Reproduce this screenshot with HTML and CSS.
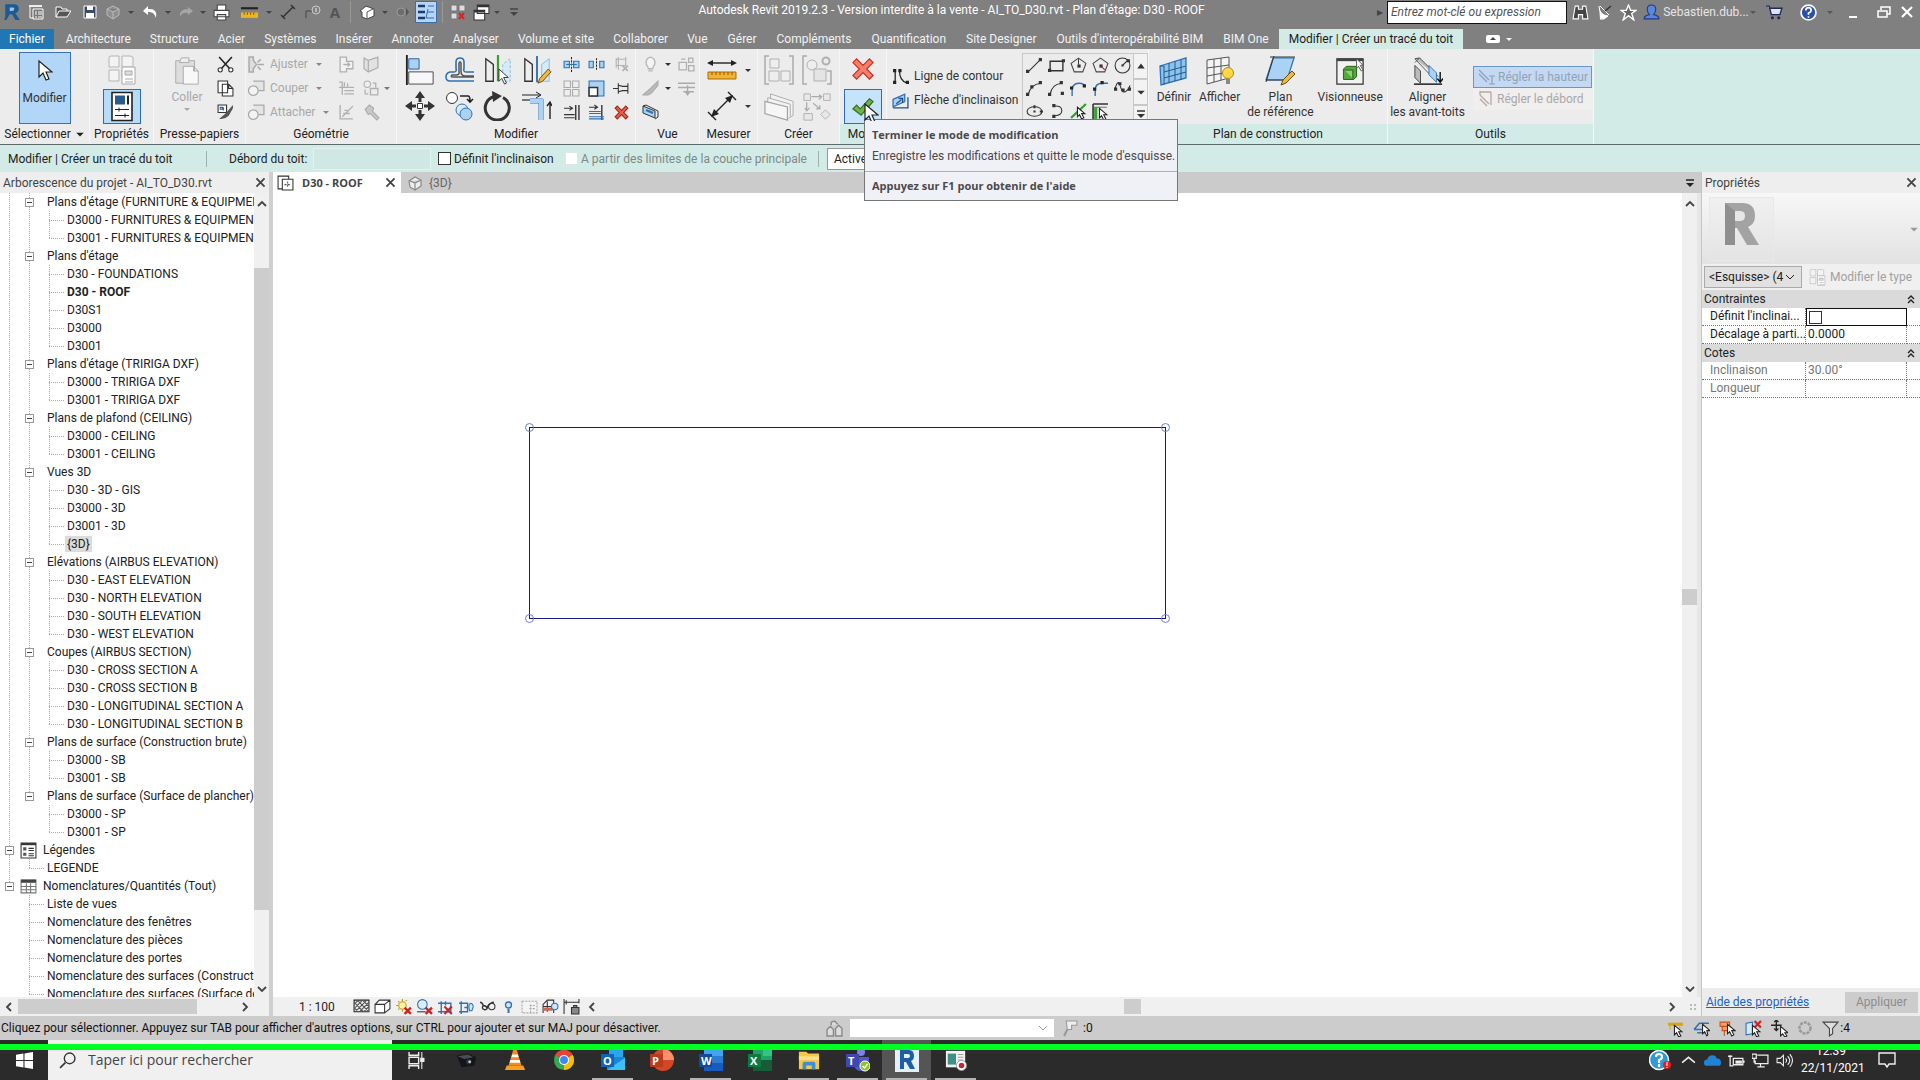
FILE: index.html
```html
<!DOCTYPE html>
<html lang="fr">
<head>
<meta charset="utf-8">
<title>Autodesk Revit 2019.2.3 - AI_TO_D30.rvt</title>
<link rel="stylesheet" href="styles.css">
</head>
<body>
<svg class="defs" width="0" height="0" aria-hidden="true">
  <symbol id="revit" viewBox="0 0 16 16"><path d="M2 1h8q4 0 4 4 0 3-3 4l4 6h-4l-3-5H6l-3 5H1l1-3z" fill="#1c5a94"/><path d="M6 4h3q1 0 1 1 0 2-2 2H6z" fill="#9cc3e6"/></symbol>
  <symbol id="list" viewBox="0 0 16 16"><path d="M1 1h13v2H1z" fill="#eee"/><path d="M2 3v11h4M5 5h10v10H5z" fill="#777" stroke="#fff"/><path d="M7 8h2m1 0h4M7 10h2m1 0h4M7 13h2m1 0h4" stroke="#fff"/></symbol>
  <symbol id="open" viewBox="0 0 16 16"><path d="M1 13V3h5l1 2h5v2M1 13l3-6h12l-4 6z" fill="#555" stroke="#fff"/></symbol>
  <symbol id="save" viewBox="0 0 16 16"><path d="M2 2h12v12H2z" fill="#3b4a68" stroke="#fff"/><path d="M5 2h6v4H5zM4 9h8v5H4z" fill="#fff"/></symbol>
  <symbol id="cube" viewBox="0 0 16 16"><path d="M2 5l6-3 6 3v6l-6 4-6-4zM2 5l6 3 6-3M8 8v7" fill="#8f8f8f" stroke="#bbb"/></symbol>
  <symbol id="undo" viewBox="0 0 16 16"><path d="M6 2L1 7l5 4V8q6-1 8 6 2-10-8-9z" fill="#fff"/></symbol>
  <symbol id="redo" viewBox="0 0 16 16"><path d="M10 3l5 4-5 4V9q-6-1-8 4-1-8 8-8z" fill="#a6a6a6"/></symbol>
  <symbol id="print" viewBox="0 0 16 16"><path d="M4 1h8v5H4zM1 6h14v6H1zM4 10h8v5H4z" fill="#fff" stroke="#444"/></symbol>
  <symbol id="rule" viewBox="0 0 16 16"><path d="M0 4h16" stroke="#222" stroke-width="2"/><path d="M0 8h16v5H0z" fill="#f0b420"/><path d="M3 8v2m3-2v2m3-2v2m3-2v2" stroke="#8a5a00"/></symbol>
  <symbol id="dim" viewBox="0 0 16 16"><path d="M3 13L13 3M1 11l4 4M11 1l4 4" stroke="#333" stroke-width="1.5"/></symbol>
  <symbol id="tag" viewBox="0 0 16 16"><path d="M1 14V7h6" stroke="#444" fill="none"/><circle cx="11" cy="6" r="4" fill="none" stroke="#ccc"/><path d="M11 4v4" stroke="#eee"/></symbol>
  <symbol id="home" viewBox="0 0 16 16"><path d="M1 7l6-5 8 3v7l-7 3-5-2V8z" fill="#fff" stroke="#444"/><path d="M8 8v7M8 8l6-3" stroke="#555"/></symbol>
  <symbol id="dot" viewBox="0 0 16 16"><circle cx="7" cy="8" r="4" fill="#6d6d6d" stroke="#9a9a9a"/><path d="M12 4l3 4-3 4z" fill="#555"/></symbol>
  <symbol id="thin" viewBox="0 0 20 20"><path d="M2 4h7M2 10h7M2 16h7" stroke="#1f3c66" stroke-width="2.5"/><path d="M12 4h6M11 10h7M10 16h8M12 7l-2 9" stroke="#2f6db0" fill="none"/></symbol>
  <symbol id="closewin" viewBox="0 0 16 16"><path d="M1 1h6v6H1zM9 1h6v6H9zM1 9h6v6H1z" fill="#ddd" stroke="#777"/><path d="M9 9l5 6M14 9l-5 6" stroke="#d22" stroke-width="2"/></symbol>
  <symbol id="switchwin" viewBox="0 0 16 16"><path d="M4 1h11v8H4zM1 6h10v9H1z" fill="#fff" stroke="#333"/><path d="M1 7h10M4 2h11" stroke="#333" stroke-width="2"/></symbol>
  <symbol id="caret" viewBox="0 0 8 8"><path d="M1 3h6L4 6z" fill="currentColor"/></symbol>
  <symbol id="caretbar" viewBox="0 0 10 10"><path d="M1 2h8" stroke="currentColor" stroke-width="1.5"/><path d="M1 5h8L5 9z" fill="currentColor"/></symbol>
  <symbol id="caretup" viewBox="0 0 8 8"><path d="M1 6h6L4 2z" fill="currentColor"/></symbol>
  <symbol id="binoc" viewBox="0 0 16 16"><path d="M3 2h3v3h4V2h3l2 12h-5v-4H6v4H1z" fill="#444" stroke="#fff"/></symbol>
  <symbol id="dish" viewBox="0 0 16 16"><path d="M2 2q0 9 9 10l-4 3H3M3 2l9 9" fill="#fff" stroke="#fff"/><path d="M8 7l6-5" stroke="#333" stroke-width="1.5"/></symbol>
  <symbol id="star" viewBox="0 0 16 16"><path d="M8 1l2 5h5l-4 3 2 6-5-4-5 4 2-6-4-3h5z" fill="#666" stroke="#fff" stroke-width="1.3"/></symbol>
  <symbol id="user" viewBox="0 0 16 16"><path d="M1 14q0-3 5-4-2-2-2-5 0-4 4-4t4 4q0 3-2 5 5 1 5 4z" fill="#5b86e0" stroke="#223a80"/></symbol>
  <symbol id="cart" viewBox="0 0 16 16"><path d="M0 2h3l2 8h8l2-6H4" fill="#dbe4f7" stroke="#1f2a55" stroke-width="1.3"/><circle cx="6" cy="13" r="1.5" fill="#1f2a55"/><circle cx="12" cy="13" r="1.5" fill="#1f2a55"/></symbol>
  <symbol id="help" viewBox="0 0 16 16"><circle cx="8" cy="8" r="7" fill="#2d4fa8" stroke="#fff" stroke-width="1.6"/><path d="M5.500 6q0-2.500 2.500-2.500T10.500 6Q10.500 7.500 8 8.500V10M8 11.500v1.500" fill="none" stroke="#fff" stroke-width="1.6"/></symbol>
  <symbol id="min" viewBox="0 0 16 16"><path d="M4 13h8" stroke="#fff" stroke-width="2"/></symbol>
  <symbol id="restore" viewBox="0 0 16 16"><path d="M5 6V3h9v7h-3M2 7h9v6H2z" fill="none" stroke="#fff" stroke-width="1.5"/></symbol>
  <symbol id="x" viewBox="0 0 16 16"><path d="M3 3l10 10M13 3L3 13" stroke="currentColor" stroke-width="2.2"/></symbol>
  <symbol id="arrow" viewBox="0 0 16 24"><path d="M2 1v16l4-4 3 7 3-1-3-7h6z" fill="#fff" stroke="#222" stroke-width="1.2"/></symbol>
  <symbol id="types" viewBox="0 0 30 30"><path d="M2 3q0-2 2-2h8v11H2zM15 12V1h8q3 0 3 2v9zM2 15h10v11H2zM15 15v7" fill="#f3f3f3" stroke="#b5b5b5"/><path d="M15 12h13v17H15z" fill="#fff" stroke="#a8a8a8"/><path d="M18 16h7v4h-7zM18 24h8M18 27h8" fill="#ddd" stroke="#a8a8a8"/></symbol>
  <symbol id="props" viewBox="0 0 22 30"><path d="M1 1h20v28H1z" fill="#fff" stroke="#222" stroke-width="1.6"/><path d="M4 4h10v9H4z" fill="#2a5a8e"/><path d="M17 4v9" stroke="#222" stroke-width="2"/><path d="M4 18h14M8 16v4M4 24h14M14 22v4" stroke="#222"/></symbol>
  <symbol id="paste" viewBox="0 0 28 32"><path d="M2 5h20v24H2z" fill="#ddd" stroke="#aaa"/><path d="M8 2h8v5H6z" fill="#eee" stroke="#aaa"/><path d="M10 11h11l5 5v14H10zM21 11v5h5" fill="#f8f8f8" stroke="#aaa"/></symbol>
  <symbol id="cut" viewBox="0 0 16 16"><path d="M2 1l10 11M14 1L4 12" stroke="#222" stroke-width="1.5"/><ellipse cx="3" cy="13" rx="2" ry="2" fill="#fff" stroke="#333"/><ellipse cx="13" cy="13" rx="2" ry="2" fill="#fff" stroke="#333"/></symbol>
  <symbol id="copy" viewBox="0 0 16 16"><path d="M1 1h9v11H1zM5 4h6l4 4v7H5zM11 4v4h4" fill="#fff" stroke="#333"/></symbol>
  <symbol id="match" viewBox="0 0 16 16"><path d="M1 1h8v7H1z" fill="#fff" stroke="#333"/><path d="M3 3h2v2H3zM6 3v3" stroke="#2a5a9e" fill="none"/><path d="M15 1L8 9l-6 5q5 1 9-3l4-7z" fill="#555"/></symbol>
  <symbol id="cope" viewBox="0 0 16 16"><path d="M1 1h4v3l3 4-3 4v3H1zM9 6l3-3M9 8h6M9 10l3 3" fill="#ddd" stroke="#aaa" stroke-width="1.4"/></symbol>
  <symbol id="cutgeo" viewBox="0 0 16 16"><path d="M5 1h10v9H9" fill="#e4e4e4" stroke="#aaa" stroke-width="1.2"/><circle cx="5" cy="10" r="4.500" fill="#f4f4f4" stroke="#aaa" stroke-width="1.2"/></symbol>
  <symbol id="cutout" viewBox="0 0 16 16"><path d="M2 1h6v4h6v7H8v3H2zM5 8h6M9 6l2 2-2 2" fill="#f2f2f2" stroke="#b0b0b0" stroke-width="1.2"/></symbol>
  <symbol id="wall" viewBox="0 0 16 16"><path d="M1 2l4 2 9-3v10l-9 4-4-3zM5 4v11" fill="#e2e2e2" stroke="#b0b0b0" stroke-width="1.2"/></symbol>
  <symbol id="beam" viewBox="0 0 16 16"><path d="M1 2h3v5h11M1 7h3v7M6 10h9M6 13h9M6 2v4M9 3v3" fill="none" stroke="#b0b0b0" stroke-width="1.2"/></symbol>
  <symbol id="paint" viewBox="0 0 16 16"><circle cx="4" cy="4" r="3" fill="#eee" stroke="#b0b0b0"/><path d="M7 8h7v6H7zM9 3h3v4M2 9v4h3" fill="none" stroke="#b0b0b0" stroke-width="1.2"/></symbol>
  <symbol id="split" viewBox="0 0 16 16"><path d="M2 1v13h12M4 12L14 2M5 9h6M6 6h3" fill="none" stroke="#b0b0b0" stroke-width="1.3"/></symbol>
  <symbol id="hammer" viewBox="0 0 16 16"><path d="M2 5l4-4 4 3-1 3 6 6-2 2-6-6-2 1z" fill="#c8c8c8" stroke="#aaa"/></symbol>
  <symbol id="align" viewBox="0 0 30 32"><path d="M1 0v32" stroke="#222" stroke-width="2"/><path d="M3 4h11v11H3z" fill="#a9d2f3" stroke="#2a5a9e"/><path d="M3 18h26v13H3z" fill="#f7f7fa" stroke="#444"/></symbol>
  <symbol id="offset" viewBox="0 0 30 30"><path d="M30 26H6q-4 0-4-4t4-5h4q3 0 2-4V7q0-4 4-4t4 4v6q-1 4 2 4h8" fill="none" stroke="#2f70b5" stroke-width="1.6"/><path d="M30 22H9q-3 0-1-2h4q4 0 3-4V8q1-2 2 0v8q0 5 4 5h9" fill="none" stroke="#555" stroke-width="1.5"/></symbol>
  <symbol id="mirpick" viewBox="0 0 30 32"><path d="M2 4l8 6v18H2z" fill="#eee" stroke="#333" stroke-width="1.4"/><path d="M28 4l-8 6v18h8z" fill="#d5ebfa" stroke="#8bb8dc" stroke-dasharray="3 2"/><path d="M15 0v28" stroke="#3aa030" stroke-width="2.4"/><path d="M16 15v13l3-3 3 6 2-1-3-6h5z" fill="#fff" stroke="#333"/></symbol>
  <symbol id="mirdraw" viewBox="0 0 30 32"><path d="M2 4l8 6v18H2z" fill="#eee" stroke="#333" stroke-width="1.4"/><path d="M28 4l-8 6v18h8z" fill="#d5ebfa" stroke="#8bb8dc"/><path d="M15 1v28" stroke="#2f70b5" stroke-width="2"/><path d="M16 30l2-5 9-10 3 3-9 10z" fill="#f3b73c" stroke="#6a4a10"/></symbol>
  <symbol id="move" viewBox="0 0 30 30"><path d="M15 0l5 7H10zM15 30l5-7H10zM0 15l7-5v10zM30 15l-7-5v10z" fill="#333"/><path d="M15 6v5M15 19v5M6 15h5M19 15h5" stroke="#333" stroke-width="3"/><path d="M12.500 12.500h5v5h-5z" fill="#fff" stroke="#333"/></symbol>
  <symbol id="copyel" viewBox="0 0 30 30"><circle cx="8" cy="7" r="5.500" fill="#fff" stroke="#333"/><path d="M16 5h8q2 0 2 5M23 8l3 3 3-3" fill="none" stroke="#222" stroke-width="1.6"/><circle cx="18" cy="19" r="6" fill="#d5ebfa" stroke="#2f70b5"/><circle cx="22" cy="23" r="6" fill="#a9d2f3" stroke="#2f70b5"/></symbol>
  <symbol id="rotate" viewBox="0 0 30 30"><path d="M11 5.500a12 12 0 1 0 9 1" fill="none" stroke="#333" stroke-width="3"/><path d="M9 0l10 5-9 6z" fill="#333"/></symbol>
  <symbol id="trim" viewBox="0 0 30 30"><path d="M0 9h18" stroke="#444" stroke-width="1.4"/><path d="M0 4h18M14 1l5 3-5 3" stroke="#222" fill="none"/><path d="M8 8h13v21M8 12h9v17" fill="none" stroke="#2f70b5"/><path d="M8 8h13v21h-4V12H8z" fill="#a9d2f3"/><path d="M28 28V12M25 15l3-4 2 4" stroke="#222" fill="none" stroke-width="1.4"/></symbol>
  <symbol id="spl1" viewBox="0 0 16 16"><path d="M1 5h5v6H1zM10 5h5v6h-5z" fill="#a9d2f3" stroke="#2f70b5"/><path d="M8 1v14" stroke="#222" stroke-dasharray="2 1"/><path d="M3 8h10" stroke="#2f70b5"/></symbol>
  <symbol id="spl2" viewBox="0 0 16 16"><path d="M1 5h4v6H1zM11 5h4v6h-4z" fill="#a9d2f3" stroke="#2f70b5"/><path d="M8 2v12" stroke="#222" stroke-dasharray="2 1"/></symbol>
  <symbol id="unpin" viewBox="0 0 16 16"><path d="M3 2v9M3 3h9v6H3M5 1v12M12 1v8" stroke="#b0b0b0" fill="none"/><path d="M9 9l5 5M14 9l-5 5" stroke="#b0b0b0" stroke-width="1.600"/></symbol>
  <symbol id="array" viewBox="0 0 16 16"><path d="M1 1h6v6H1zM9 1h6v6H9zM1 9h6v6H1zM9 9h6v6H9z" fill="#eee" stroke="#aaa"/></symbol>
  <symbol id="scale" viewBox="0 0 16 16"><path d="M1 1h14v14H1z" fill="#a9d2f3" stroke="#2f70b5"/><path d="M1 7h8v8H1z" fill="#fff" stroke="#333" stroke-width="1.4"/></symbol>
  <symbol id="pin" viewBox="0 0 16 16"><path d="M0 8h5M5 3v10M5 5l4 1h5M5 11l4-1h5M14 3v10" stroke="#333" fill="none"/></symbol>
  <symbol id="tr1" viewBox="0 0 16 16"><path d="M12 1v14M15 1v14" stroke="#333" stroke-width="1.3"/><path d="M1 4h8M6 2l3 2-3 2M1 10h10M1 13h10" stroke="#333" fill="none"/></symbol>
  <symbol id="tr2" viewBox="0 0 16 16"><path d="M13 1v14" stroke="#333" stroke-width="1.3"/><path d="M1 3h8M6 1l3 2-3 2" stroke="#333" fill="none"/><path d="M1 7h11M1 9h11M1 12h14M1 14h14" stroke="#2f70b5"/></symbol>
  <symbol id="del" viewBox="0 0 16 16"><path d="M2 4l2-2 4 4 4-4 2 2-4 4 4 4-2 2-4-4-4 4-2-2 4-4z" fill="#e8604c" stroke="#a3281c"/></symbol>
  <symbol id="bulb" viewBox="0 0 16 16"><path d="M6 12q0-2-2-4-1-6 4-7 5 1 4 7-2 2-2 4zM6 14h4" fill="#f4f4f4" stroke="#b5b5b5" stroke-width="1.2"/></symbol>
  <symbol id="ghost" viewBox="0 0 16 16"><path d="M1 6h7v7H1zM10 2h4v4h-4zM10 9h5v5h-5zM3 3h4" fill="#eee" stroke="#b0b0b0" stroke-width="1.2"/></symbol>
  <symbol id="brush" viewBox="0 0 16 16"><path d="M15 1L8 8l-7 6q6 1 9-3l5-6z" fill="#bbb" stroke="#aaa"/></symbol>
  <symbol id="lw" viewBox="0 0 16 16"><path d="M0 3h16M0 7h16M5 11h10M9 5v8M7 11l2 3 2-3" stroke="#aaa" stroke-width="1.3" fill="none"/></symbol>
  <symbol id="sbox" viewBox="0 0 18 16"><path d="M2 2l12 5v7L2 9z" fill="#a9d2f3" stroke="#333"/><path d="M2 2l3-1 12 6v6l-3 2" fill="none" stroke="#333"/><path d="M5 6l7 3" stroke="#2f70b5" stroke-width="2"/></symbol>
  <symbol id="measure" viewBox="0 0 30 22"><path d="M3 4h24" stroke="#222" stroke-width="1.400"/><path d="M0 4l6-3v6zM30 4l-6-3v6z" fill="#222"/><path d="M1 13h28v7H1z" fill="#f2b233" stroke="#a86b08"/><path d="M5 13v3m4-3v3m4-3v3m4-3v3m4-3v3m4-3v3" stroke="#8a5a00"/></symbol>
  <symbol id="bigdim" viewBox="0 0 30 30"><path d="M6 24L24 6M1 21l8 8M21 1l8 8" stroke="#222" stroke-width="1.400"/><path d="M4 26l3-8 5 5zM26 4l-3 8-5-5z" fill="#222"/></symbol>
  <symbol id="grp1" viewBox="0 0 30 30"><path d="M5 1H1v28h4M25 1h4v28h-4" fill="none" stroke="#aaa" stroke-width="1.500"/><path d="M6 4h9v9H6zM5 16h10v10H5zM17 16h9v10h-9z" fill="#eee" stroke="#b0b0b0"/></symbol>
  <symbol id="grp2" viewBox="0 0 30 30"><path d="M5 1H1v28h4M25 16h4v13h-4" fill="none" stroke="#aaa" stroke-width="1.500"/><circle cx="10" cy="10" r="5" fill="#eee" stroke="#b0b0b0"/><path d="M12 14h12v12H12z" fill="#e4e4e4" stroke="#b0b0b0"/><circle cx="24" cy="6" r="3.500" fill="none" stroke="#b0b0b0" stroke-width="2"/></symbol>
  <symbol id="asm1" viewBox="0 0 32 30"><path d="M7 10V1l24 8v15l-5 3" fill="#f2f2f2" stroke="#aaa"/><path d="M4 12V5l24 7v13" fill="#f2f2f2" stroke="#aaa"/><path d="M1 9l24 6v14L1 22z" fill="#f6f6f6" stroke="#a4a4a4" stroke-width="1.3"/></symbol>
  <symbol id="asm2" viewBox="0 0 32 30"><path d="M2 1h7v7H2zM23 1h7v7h-7zM2 22h9v7H2zM25 18l5 5-5 5-5-5z" fill="#e8e8e8" stroke="#b0b0b0"/><path d="M10 4h11M18 2l3 2-3 3M5 10v9M3 16l2 3 3-3M12 11l7 6M19 13v4h-4" fill="none" stroke="#aaa" stroke-width="1.300"/></symbol>
  <symbol id="cancel" viewBox="0 0 24 24"><path d="M1 5l4-4 7 7 7-7 4 4-7 7 7 7-4 4-7-7-7 7-4-4 7-7z" fill="#f0806c" stroke="#d02c20" stroke-width="1.300"/></symbol>
  <symbol id="ok" viewBox="0 0 24 20"><path d="M1 12l4-4 4 4L19 1l4 3L10 19z" fill="#6cb548" stroke="#3c6e22" stroke-width="1.300"/></symbol>
  <symbol id="contour" viewBox="0 0 16 16"><path d="M3 2v12M7 2q0 10 7 12" fill="none" stroke="#222" stroke-width="1.200"/><path d="M1 1h3v3H1zM6 1h3v3H6zM1 12h3v3H1zM13 12h3v3h-3z" fill="#222"/></symbol>
  <symbol id="slope" viewBox="0 0 16 16"><path d="M1 7l11-5v7L1 14z" fill="#a9d2f3" stroke="#2f70b5" stroke-width="1.200"/><path d="M1 15h14V5M4 11l5-4M6 6h4v4" fill="none" stroke="#1f4f86" stroke-width="1.200"/></symbol>
  <symbol id="d1" viewBox="0 0 16 16"><path d="M2 14L14 2" stroke="#333"/><path d="M0 12h3v3H0zM12 1h3v3h-3z" fill="#333"/></symbol>
  <symbol id="d2" viewBox="0 0 16 16"><path d="M2 4h12v9H2z" fill="none" stroke="#333" stroke-width="1.300"/><path d="M0 11h3v3H0zM13 2h3v3h-3z" fill="#333"/></symbol>
  <symbol id="d3" viewBox="0 0 16 16"><path d="M8 1l7 5-3 8H4L1 6z" fill="none" stroke="#444"/><path d="M7 7h3v3H7z" fill="#333"/><path d="M8 2v5" stroke="#333"/></symbol>
  <symbol id="d4" viewBox="0 0 16 16"><path d="M8 1l7 5-3 8H4L1 6z" fill="none" stroke="#444"/><path d="M7 7h3v3H7z" fill="#333"/><path d="M9 9l3 3" stroke="#c22"/></symbol>
  <symbol id="d5" viewBox="0 0 16 16"><circle cx="8" cy="8" r="7" fill="none" stroke="#333"/><path d="M8 8l5-5" stroke="#333"/><path d="M7 7h2v2H7zM12 2h3v3h-3z" fill="#333"/></symbol>
  <symbol id="d6" viewBox="0 0 16 16"><path d="M2 14Q4 4 14 3" fill="none" stroke="#333"/><path d="M0 12h3v3H0zM4 5h3v3H4zM12 1h3v3h-3z" fill="#333"/></symbol>
  <symbol id="d7" viewBox="0 0 16 16"><path d="M2 14Q3 4 13 3" fill="none" stroke="#333"/><path d="M0 12h3v3H0zM11 1h3v3h-3zM12 11h3v3h-3z" fill="#333"/></symbol>
  <symbol id="d8" viewBox="0 0 16 16"><path d="M2 15V8q1-5 7-5 4 0 5 3" fill="none" stroke="#2f70b5" stroke-width="1.300"/><path d="M0 6h3v3H0zM12 4h3v3h-3z" fill="#222"/></symbol>
  <symbol id="d9" viewBox="0 0 16 16"><path d="M3 15V9q0-6 7-6h5" fill="none" stroke="#2f70b5" stroke-width="1.300"/><path d="M1 7h3v3H1zM8 1h3v3H8z" fill="#222"/></symbol>
  <symbol id="d10" viewBox="0 0 16 16"><path d="M1 8q3-10 5-2t6 4q2-1 3-5" fill="none" stroke="#333"/><path d="M0 7h3v3H0zM4 2h3v3H4zM7 8h3v3H7zM13 7h3v3h-3z" fill="#333"/></symbol>
  <symbol id="d11" viewBox="0 0 16 16"><ellipse cx="8" cy="8" rx="7" ry="4.500" fill="none" stroke="#333"/><path d="M7 7h2v2H7zM7 2h2v3H7zM13 7h3v2h-3z" fill="#333"/></symbol>
  <symbol id="d12" viewBox="0 0 16 16"><path d="M5 3q8-1 8 4t-8 5" fill="none" stroke="#333"/><path d="M4 1h3v3H4zM4 11h3v3H4z" fill="#333"/></symbol>
  <symbol id="d13" viewBox="0 0 16 16"><path d="M1 14L15 1" stroke="#2ca02c" stroke-width="2"/><path d="M7 4v9l2-2 2 4 2-1-2-4h3z" fill="#fff" stroke="#222"/></symbol>
  <symbol id="d14" viewBox="0 0 16 16"><path d="M1 1h14M1 1v14" stroke="#333" stroke-width="1.500"/><path d="M2 4h3v11H2z" fill="#3aa030"/><path d="M2 4h12" stroke="#777"/><path d="M7 5v9l2-2 2 4 2-1-2-4h3z" fill="#fff" stroke="#222"/></symbol>
  <symbol id="define" viewBox="0 0 30 30"><path d="M1 10L27 2v20L2 29z" fill="#8fc3ea" stroke="#2f70b5" stroke-width="1.300"/><path d="M1 10h4v19M10 7v20M16 5v20M22 4v20M5 16l22-6M5 22l22-6" fill="none" stroke="#1f5a94"/></symbol>
  <symbol id="show" viewBox="0 0 30 30"><path d="M2 4l22-3v21L2 28zM9 3v23M16 2v22M2 12l22-3M2 20l22-4" fill="#f4f4f4" stroke="#555"/><circle cx="23" cy="17" r="5.500" fill="#ffd84a" stroke="#b88a10"/><path d="M21 23h4v5h-4z" fill="#888"/></symbol>
  <symbol id="refplane" viewBox="0 0 30 30"><path d="M8 2h21l-7 22H1z" fill="#a9d2f3" stroke="#2f70b5" stroke-width="1.200"/><path d="M5 1h25M1 24h18M9 0L1 26" stroke="#333"/><path d="M16 29l2-5 9-9 3 3-9 9z" fill="#f3b73c" stroke="#6a4a10"/></symbol>
  <symbol id="viewer" viewBox="0 0 32 30"><path d="M2 2h28v27H2z" fill="#f2f2f2" stroke="#333" stroke-width="1.300"/><path d="M2 3h28" stroke="#444" stroke-width="3"/><path d="M9 13l3-3h11v11l-3 3H9z" fill="#54a93c" stroke="#225c14"/><path d="M10 14h9v9" fill="#8fd070" stroke="#225c14"/><path d="M23 2v10l2-2 3 5 2-1-3-5h3z" fill="#fff" stroke="#555"/></symbol>
  <symbol id="eaves" viewBox="0 0 32 30"><path d="M2 9l6 6v13l-6-6zM2 2l5-1 20 20" fill="#bbb" stroke="#444"/><path d="M2 2l20 21M7 1l-5 5" stroke="#555"/><path d="M17 9l8 8v10l-8-8z" fill="#a9d2f3" stroke="#2f70b5"/><path d="M1 29h30" stroke="#111" stroke-width="1.500"/><path d="M29 16v10M26 23l3 4 3-4" stroke="#111" fill="none" stroke-width="1.500"/></symbol>
  <symbol id="setH" viewBox="0 0 18 16"><path d="M1 1l10 10M1 5l8 8M14 7v8M11 7h6M11 15h6" stroke="#8f9fb8" stroke-width="1.200"/></symbol>
  <symbol id="setD" viewBox="0 0 18 16"><path d="M3 4l9 9M3 8l7 7M3 1h11M14 1v13M3 0v4" stroke="#b8a8a0" stroke-width="1.300"/></symbol>
  <symbol id="toggle" viewBox="0 0 16 10"><rect x="1" y="1" width="14" height="8" rx="2" fill="#fff"/><path d="M5 6h6L8 3z" fill="#444"/></symbol>
  <symbol id="plan" viewBox="0 0 16 16"><path d="M1 2h10v12H1z" fill="#fff" stroke="#333"/><path d="M5 5h10v10H5z" fill="#fff" stroke="#333"/><path d="M7 10h6M10 7v6" stroke="#555" stroke-dasharray="2 1"/></symbol>
  <symbol id="view3d" viewBox="0 0 16 16"><path d="M2 6l6-4 6 3v6l-6 4-5-3zM8 8v7M3 6l5 2 6-3" fill="#eee" stroke="#888" stroke-width="1.200"/></symbol>
  <symbol id="chevU" viewBox="0 0 10 10"><path d="M1 7l4-4 4 4" fill="none" stroke="#444" stroke-width="1.800"/></symbol>
  <symbol id="chevD" viewBox="0 0 10 10"><path d="M1 3l4 4 4-4" fill="none" stroke="#444" stroke-width="1.800"/></symbol>
  <symbol id="chevL" viewBox="0 0 10 10"><path d="M7 1L3 5l4 4" fill="none" stroke="#444" stroke-width="1.800"/></symbol>
  <symbol id="chevR" viewBox="0 0 10 10"><path d="M3 1l4 4-4 4" fill="none" stroke="#444" stroke-width="1.800"/></symbol>
  <symbol id="chevT" viewBox="0 0 10 10"><path d="M1 3l4 4 4-4" fill="none" stroke="currentColor"/></symbol>
  <symbol id="dbl" viewBox="0 0 8 10"><path d="M1 5l3-3 3 3M1 9l3-3 3 3" fill="none" stroke="#222" stroke-width="1.400"/></symbol>
  <symbol id="legend" viewBox="0 0 16 16"><path d="M1 1h14v14H1z" fill="#fff" stroke="#333"/><path d="M1 2h14" stroke="#333" stroke-width="2"/><path d="M3 5h3v3H3zM3 10h3v3H3z" fill="#555"/><path d="M8 6h5M8 8h5M8 11h5M8 13h5" stroke="#333"/></symbol>
  <symbol id="table" viewBox="0 0 16 14"><path d="M1 1h14v12H1zM1 7h14M1 10h14M6 4v9M10 4v9" fill="#fff" stroke="#777"/><path d="M1 2h14" stroke="#444" stroke-width="3"/></symbol>
  <symbol id="v1" viewBox="0 0 16 16"><path d="M1 2h14v11H1z" fill="#eee" stroke="#222"/><path d="M2 5l3-3M2 9l7-7M2 13L13 2M6 13l9-9M10 13l5-5M4 2l11 11M1 4l9 9M1 9l4 4M9 2l6 6" stroke="#555"/></symbol>
  <symbol id="v2" viewBox="0 0 16 16"><path d="M1 6h9v8H1zM1 6l4-4h10v8l-5 4M10 6l5-4" fill="#fff" stroke="#333"/></symbol>
  <symbol id="v3" viewBox="0 0 16 16"><circle cx="7" cy="7" r="3.500" fill="#fff2a0" stroke="#c49a10"/><path d="M7 1v2M7 11v2M1 7h2M3 3l1 1M10 3l1-1M3 11l1-1" stroke="#c49a10"/><path d="M9 9l6 6M15 9l-6 6" stroke="#c22" stroke-width="2.200"/></symbol>
  <symbol id="v4" viewBox="0 0 16 16"><circle cx="6" cy="6" r="4.500" fill="#dcecfa" stroke="#2f70b5"/><path d="M1 13h8" stroke="#333"/><path d="M9 9l6 6M15 9l-6 6" stroke="#c22" stroke-width="2.200"/></symbol>
  <symbol id="v5" viewBox="0 0 16 16"><path d="M4 3v12M1 5h12v8H1M8 3v4" fill="none" stroke="#2f70b5" stroke-width="1.300"/><path d="M7 8l7 7M14 8l-7 7" stroke="#c22" stroke-width="2"/></symbol>
  <symbol id="v6" viewBox="0 0 16 16"><path d="M3 3v12M1 5h8v8H1M6 9h3" fill="none" stroke="#2f70b5" stroke-width="1.300"/><path d="M11 12q-2-6 1-7 4 1 1 7z" fill="#cfe5fb" stroke="#2f70b5"/></symbol>
  <symbol id="v7" viewBox="0 0 16 16"><path d="M1 4q2 0 3 3 3 0 4 3M4 7q-2 3 1 4 3 0 3-3 3-4 6-4" fill="none" stroke="#333" stroke-width="1.300"/><circle cx="12" cy="8" r="3" fill="none" stroke="#333"/></symbol>
  <symbol id="v8" viewBox="0 0 16 16"><circle cx="8" cy="6" r="3" fill="#cfe5fb" stroke="#2f70b5" stroke-width="1.300"/><path d="M7 10h2v4H7z" fill="#2f70b5"/></symbol>
  <symbol id="v9" viewBox="0 0 16 16"><path d="M1 3h14v11H1zM8 7h6M8 10h6M9 14V6" fill="#f4f4f4" stroke="#aaa" stroke-dasharray="2 1"/></symbol>
  <symbol id="v10" viewBox="0 0 16 16"><path d="M1 14V6l4-4h6v12M1 8h9M5 3v10" fill="none" stroke="#333"/><path d="M1 9h9v3H1z" fill="#c65"/><circle cx="12" cy="8" r="3" fill="#cfe5fb" stroke="#2f70b5"/></symbol>
  <symbol id="v11" viewBox="0 0 16 16"><path d="M1 1v14M15 1v4M1 4h14M3 2v4" fill="none" stroke="#333"/><path d="M8 9h7v6H8zM10 9V7h3v2" fill="#888" stroke="#333"/></symbol>
  <symbol id="s1" viewBox="0 0 16 16"><path d="M1 4h14" stroke="#d7a80c" stroke-width="3"/><path d="M3 6v3M12 6v3" stroke="#d7a80c"/><path d="M7 5v9l2-2 2 4 2-1-2-4h3z" fill="#fff" stroke="#222"/></symbol>
  <symbol id="s2" viewBox="0 0 16 16"><path d="M1 9l5-6h9M1 9h12M4 12h10" stroke="#2f70b5" stroke-width="1.500" fill="none"/><path d="M9 4v9l2-2 2 4 1-1-1-4h3z" fill="#fff" stroke="#222"/></symbol>
  <symbol id="s3" viewBox="0 0 16 16"><path d="M1 2h9v4H1zM3 6h5v4H3zM5 10v5" fill="#f7a05a" stroke="#c5501c"/><path d="M8 4v9l2-2 2 4 2-1-2-4h3z" fill="#fff" stroke="#222"/></symbol>
  <symbol id="s4" viewBox="0 0 16 16"><path d="M1 3l6-1v11l-6 1z" fill="#d5ebfa" stroke="#2f70b5"/><path d="M9 1l6 6M15 1L9 7" stroke="#c22" stroke-width="2"/><path d="M7 5v9l2-2 2 4 2-1-2-4h3z" fill="#fff" stroke="#222"/></symbol>
  <symbol id="s5" viewBox="0 0 16 16"><path d="M5 0v10M0 5h10M3 2l2-2 2 2M3 8l2 2 2-2" stroke="#222" fill="none" stroke-width="1.300"/><path d="M9 6v9l2-2 2 3 2-1-2-3h3z" fill="#fff" stroke="#222"/></symbol>
  <symbol id="s6" viewBox="0 0 16 16"><circle cx="8" cy="8" r="5.500" fill="none" stroke="#999" stroke-width="2.500" stroke-dasharray="3 1"/></symbol>
  <symbol id="funnel" viewBox="0 0 16 16"><path d="M1 2h14l-5 6v5l-3 2V8z" fill="#ddd" stroke="#444"/></symbol>
  <symbol id="wset" viewBox="0 0 16 16"><path d="M1 15V9l3-3 3 3v6zM9 15V8l3-3 3 3v7zM5 5V2l3-1 3 3" fill="#ddd" stroke="#888" stroke-width="1.300"/></symbol>
  <symbol id="pick0" viewBox="0 0 16 16"><path d="M4 1h10v4H9v4H5z" fill="#eee" stroke="#999"/><path d="M5 9l-3 6" stroke="#999" stroke-width="2"/></symbol>
  <symbol id="win" viewBox="0 0 16 16"><path d="M0 2.500L7 1.500v6H0zM8 1.300L16 0v7.500H8zM0 8.500h7v6l-7-1zM8 8.500h8V16l-8-1.300z" fill="#fff"/></symbol>
  <symbol id="mag" viewBox="0 0 16 16"><circle cx="10" cy="6" r="5" fill="none" stroke="#333" stroke-width="1.300"/><path d="M6 10l-5 5" stroke="#333" stroke-width="1.500"/></symbol>
  <symbol id="taskview" viewBox="0 0 16 16"><path d="M1 0v3h9V0M1 16v-3h9v3M1 5h9v6H1z" fill="none" stroke="#eee" stroke-width="1.300"/><path d="M13 0v16M12 6h3v3h-3z" fill="#eee" stroke="#eee"/></symbol>
  <symbol id="cam" viewBox="0 0 24 24"><path d="M2 7l12-2 9 4-2 9-14 2z" fill="#131518"/><path d="M3 8l11-2 6 3-10 2z" fill="#4a4e54"/><circle cx="15" cy="14" r="3" fill="#2e3238"/><circle cx="16" cy="14" r="1.500" fill="#ccd"/></symbol>
  <symbol id="vlc" viewBox="0 0 24 24"><path d="M10 1h4l5 17H5z" fill="#f28a1c"/><path d="M9 6h6l1 3H8zM7 12h10l1 3H6z" fill="#fff"/><path d="M3 18h18l2 5H1z" fill="#f5a11e"/></symbol>
  <symbol id="chrome" viewBox="0 0 24 24"><circle cx="12" cy="12" r="11" fill="#34a853"/><path d="M12 12L2.500 6.500A11 11 0 0 1 21.500 6.500z" fill="#ea4335"/><path d="M12 12l9.500-5.500A11 11 0 0 1 12 23z" fill="#fbbc05"/><circle cx="12" cy="12" r="5.500" fill="#fff"/><circle cx="12" cy="12" r="4.300" fill="#4285f4"/></symbol>
  <symbol id="outlook" viewBox="0 0 24 24"><path d="M8 1h14v9H8z" fill="#28a8ea"/><path d="M6 9h18v13H6z" fill="#1a86d8"/><path d="M6 22l18-12v12z" fill="#3cc0f5"/><path d="M0 6h13v13H0z" fill="#0f64b4"/></symbol>
  <symbol id="ppt" viewBox="0 0 24 24"><circle cx="13" cy="12" r="11" fill="#d24726"/><path d="M13 1a11 11 0 0 1 11 11H13z" fill="#ff8f6b"/><path d="M0 6h13v13H0z" fill="#b83b1d"/></symbol>
  <symbol id="word" viewBox="0 0 24 24"><path d="M5 1h19v7H5z" fill="#41a5ee"/><path d="M5 8h19v7H5z" fill="#2b7cd3"/><path d="M5 15h19v8H5z" fill="#185abd"/><path d="M0 6h13v13H0z" fill="#134a9e"/></symbol>
  <symbol id="excel" viewBox="0 0 24 24"><path d="M5 1h19v11H5z" fill="#21a366"/><path d="M15 1h9v7h-9z" fill="#33c481"/><path d="M5 12h19v11H5z" fill="#185c37"/><path d="M0 6h13v13H0z" fill="#0f7a41"/></symbol>
  <symbol id="teams" viewBox="0 0 24 24"><circle cx="15" cy="4" r="4" fill="#7b83eb"/><path d="M8 9h15v9q-3 5-8 5t-7-5z" fill="#5059c9"/><path d="M0 6h13v13H0z" fill="#3f47b0"/><circle cx="19" cy="18" r="5" fill="#8fc31f" stroke="#fff"/><path d="M16.500 18l2 2 3-4" stroke="#fff" fill="none" stroke-width="1.400"/></symbol>
  <symbol id="folder" viewBox="0 0 24 24"><path d="M1 3h8l2 2h12v17H1z" fill="#f5c84c"/><path d="M1 8h22v4H1z" fill="#ffe08a"/><path d="M5 22v-6q0-2 2-2h10q2 0 2 2v6h-4v-4H9v4z" fill="#3f8ed8"/></symbol>
  <symbol id="rapp" viewBox="0 0 24 24"><path d="M0 0h24v24H0z" fill="#e6f0fa"/><path d="M5 2h9q5 0 5 6 0 4-3 5l4 8h-5l-4-7h-2v7H5z" fill="#1c5fa8"/><path d="M9 6h4q2 0 2 2t-2 2H9z" fill="#e6f0fa"/></symbol>
  <symbol id="rec" viewBox="0 0 24 24"><path d="M1 2h21v18H1z" fill="#f2f2f2"/><path d="M3 5h9v12H3z" fill="#3f8f86"/><path d="M14 6h6M14 9h6M14 12h6" stroke="#999"/><circle cx="18" cy="18" r="5.500" fill="#fff" stroke="#999"/><circle cx="18" cy="18" r="3" fill="#d0202c"/></symbol>
  <symbol id="ask" viewBox="0 0 22 22"><circle cx="10" cy="11" r="9.500" fill="#2e9ad8" stroke="#fff" stroke-width="1.500"/><path d="M7 8q0-3 3-3t3 3q0 2-3 3v3M10 15v3" stroke="#fff" fill="none" stroke-width="2.200"/><circle cx="18" cy="16" r="4" fill="#d22"/><path d="M18 13v4M18 18v1" stroke="#fff"/></symbol>
  <symbol id="up" viewBox="0 0 16 16"><path d="M2 10l6-5 6 5" fill="none" stroke="#eee" stroke-width="1.500"/></symbol>
  <symbol id="cloud" viewBox="0 0 16 16"><path d="M3 13q-3 0-3-3t3-3q1-4 5-4 3 0 4 3 4 0 4 4 0 3-3 3z" fill="#1f84d6"/></symbol>
  <symbol id="batt" viewBox="0 0 16 16"><path d="M5 6h9v6H5zM15 8v2M2 3v4M0 4h4M2 7v6h3" fill="none" stroke="#eee" stroke-width="1.200"/><path d="M7 8h6v3H7z" fill="#eee"/></symbol>
  <symbol id="net" viewBox="0 0 16 16"><path d="M5 3h10v8H3V8M8 11v3M5 14h7M0 2h4v4H0zM2 6v4" fill="none" stroke="#eee" stroke-width="1.200"/></symbol>
  <symbol id="snd" viewBox="0 0 16 16"><path d="M1 6h3l3-3v10l-3-3H1zM9 6q2 2 0 4M11 4q4 4 0 8M13 2q5 6 0 12" fill="none" stroke="#eee"/></symbol>
  <symbol id="note" viewBox="0 0 18 16"><path d="M1 1h16v11h-6l-2 3-2-3H1z" fill="none" stroke="#eee" stroke-width="1.400"/></symbol>
</svg>

<header class="titlebar">
  <nav class="qat" aria-label="Accès rapide">
    <svg class="i18"><use href="#revit"/></svg><svg class="i14"><use href="#list"/></svg><svg class="i14"><use href="#open"/></svg><svg class="i14"><use href="#save"/></svg><svg class="i14"><use href="#cube"/></svg><svg class="i6"><use href="#caret"/></svg><svg class="i14"><use href="#undo"/></svg><svg class="i6"><use href="#caret"/></svg><svg class="i14"><use href="#redo"/></svg><svg class="i6"><use href="#caret"/></svg><svg class="i16"><use href="#print"/></svg><svg class="i16"><use href="#rule"/></svg><svg class="i6"><use href="#caret"/></svg><svg class="i14"><use href="#dim"/></svg><svg class="i14"><use href="#tag"/></svg><b class="letter">A</b><i class="vsep"></i><svg class="i14"><use href="#home"/></svg><svg class="i6"><use href="#caret"/></svg><svg class="i14"><use href="#dot"/></svg><span class="lit"><svg class="i20"><use href="#thin"/></svg></span><i class="vsep"></i><svg class="i14"><use href="#closewin"/></svg><svg class="i16"><use href="#switchwin"/></svg><svg class="i6"><use href="#caret"/></svg><svg class="i8"><use href="#caretbar"/></svg>
  </nav>
  <div class="apptitle">Autodesk Revit 2019.2.3 - Version interdite à la vente - AI_TO_D30.rvt - Plan d'étage: D30 - ROOF</div>
  <div class="infocenter">
    <span class="tri">▸</span><input class="search" type="text" aria-label="Recherche" placeholder="Entrez mot-clé ou expression">
    <svg class="i16"><use href="#binoc"/></svg><svg class="i14"><use href="#dish"/></svg><svg class="i16"><use href="#star"/></svg><svg class="i16"><use href="#user"/></svg><span class="login">Sebastien.dub...</span><svg class="i6"><use href="#caret"/></svg><svg class="i16"><use href="#cart"/></svg><svg class="i16"><use href="#help"/></svg><svg class="i6"><use href="#caret"/></svg><svg class="i14"><use href="#min"/></svg><svg class="i14"><use href="#restore"/></svg><svg class="i14"><use href="#x"/></svg>
  </div>
</header>

<nav class="tabs">
  <a class="file" href="#">Fichier</a><a href="#">Architecture</a><a href="#">Structure</a><a href="#">Acier</a><a href="#">Systèmes</a><a href="#">Insérer</a><a href="#">Annoter</a><a href="#">Analyser</a><a href="#">Volume et site</a><a href="#">Collaborer</a><a href="#">Vue</a><a href="#">Gérer</a><a href="#">Compléments</a><a href="#">Quantification</a><a href="#">Site Designer</a><a href="#">Outils d'interopérabilité BIM</a><a href="#">BIM One</a><a class="current" href="#">Modifier | Créer un tracé du toit</a>
  <span class="toggle"><svg class="tgl"><use href="#toggle"/></svg><svg class="i6"><use href="#caret"/></svg></span>
</nav>

<section class="ribbon">
  <div class="panel"><div class="body center"><button class="modify"><svg class="cur"><use href="#arrow"/></svg>Modifier</button></div><h2>Sélectionner <svg class="i8"><use href="#caret"/></svg></h2></div>
  <div class="panel"><div class="body stack"><svg class="i30"><use href="#types"/></svg><button class="on" aria-label="Propriétés"><svg class="pr"><use href="#props"/></svg></button></div><h2>Propriétés</h2></div>
  <div class="panel"><div class="body row paste"><button class="big dim"><svg class="i30"><use href="#paste"/></svg>Coller<svg class="i6"><use href="#caret"/></svg></button><div class="col3"><svg class="i16"><use href="#cut"/></svg><svg class="i16"><use href="#copy"/></svg><svg class="i16"><use href="#match"/></svg></div></div><h2>Presse-papiers</h2></div>
  <div class="panel"><div class="body geo">
    <button class="sm dim"><svg class="i16"><use href="#cope"/></svg>Ajuster<svg class="i6"><use href="#caret"/></svg></button><svg class="i16"><use href="#cutout"/></svg><svg class="i16"><use href="#wall"/></svg><i></i>
    <button class="sm dim"><svg class="i16"><use href="#cutgeo"/></svg>Couper<svg class="i6"><use href="#caret"/></svg></button><svg class="i16"><use href="#beam"/></svg><svg class="i16"><use href="#paint"/></svg><svg class="i6"><use href="#caret"/></svg>
    <button class="sm dim"><svg class="i16"><use href="#cutgeo"/></svg>Attacher<svg class="i6"><use href="#caret"/></svg></button><svg class="i16"><use href="#split"/></svg><svg class="i16"><use href="#hammer"/></svg><i></i></div><h2>Géométrie</h2></div>
  <div class="panel"><div class="body row mod"><div class="grid4"><svg class="i30"><use href="#align"/></svg><svg class="i30"><use href="#offset"/></svg><svg class="i30"><use href="#mirpick"/></svg><svg class="i30"><use href="#mirdraw"/></svg><svg class="i30"><use href="#move"/></svg><svg class="i30"><use href="#copyel"/></svg><svg class="i30"><use href="#rotate"/></svg><svg class="i30"><use href="#trim"/></svg></div>
    <div class="grid3"><svg class="i16"><use href="#spl1"/></svg><svg class="i16"><use href="#spl2"/></svg><svg class="i16"><use href="#unpin"/></svg><svg class="i16"><use href="#array"/></svg><svg class="i16"><use href="#scale"/></svg><svg class="i16"><use href="#pin"/></svg><svg class="i16"><use href="#tr1"/></svg><svg class="i16"><use href="#tr2"/></svg><svg class="i16"><use href="#del"/></svg></div></div><h2>Modifier</h2></div>
  <div class="panel"><div class="body vue"><svg class="i16"><use href="#bulb"/></svg><svg class="i6"><use href="#caret"/></svg><svg class="i16"><use href="#ghost"/></svg><svg class="i16"><use href="#brush"/></svg><svg class="i6"><use href="#caret"/></svg><svg class="i16"><use href="#lw"/></svg><svg class="i18"><use href="#sbox"/></svg></div><h2>Vue</h2></div>
  <div class="panel"><div class="body mes"><svg class="i30"><use href="#measure"/></svg><svg class="i6"><use href="#caret"/></svg><svg class="i30"><use href="#bigdim"/></svg><svg class="i6"><use href="#caret"/></svg></div><h2>Mesurer</h2></div>
  <div class="panel"><div class="body cre"><svg class="i30"><use href="#grp1"/></svg><svg class="i30"><use href="#grp2"/></svg><svg class="i30"><use href="#asm1"/></svg><svg class="i30"><use href="#asm2"/></svg></div><h2>Créer</h2></div>
  <div class="panel ctx"><div class="body stack"><svg class="i22"><use href="#cancel"/></svg><button class="on finish" aria-label="Terminer"><svg class="i22"><use href="#ok"/></svg></button></div><h2>Mode</h2></div>
  <div class="panel ctx"><div class="body row draw"><div class="pair"><button class="sm"><svg class="i16"><use href="#contour"/></svg>Ligne de contour</button><button class="sm"><svg class="i16"><use href="#slope"/></svg>Flèche d'inclinaison</button></div>
    <div class="gallery"><svg class="i16"><use href="#d1"/></svg><svg class="i16"><use href="#d2"/></svg><svg class="i16"><use href="#d3"/></svg><svg class="i16"><use href="#d4"/></svg><svg class="i16"><use href="#d5"/></svg><svg class="i16"><use href="#d6"/></svg><svg class="i16"><use href="#d7"/></svg><svg class="i16"><use href="#d8"/></svg><svg class="i16"><use href="#d9"/></svg><svg class="i16"><use href="#d10"/></svg><svg class="i16"><use href="#d11"/></svg><svg class="i16"><use href="#d12"/></svg><svg class="i16"><use href="#d13"/></svg><svg class="i16"><use href="#d14"/></svg></div>
    <div class="spin"><button aria-label="Haut"><svg class="i8"><use href="#caretup"/></svg></button><button aria-label="Bas"><svg class="i8"><use href="#caret"/></svg></button><button aria-label="Plus"><svg class="i8"><use href="#caretbar"/></svg></button></div></div><h2></h2></div>
  <div class="panel ctx"><div class="body row plan"><button class="big"><svg class="i30"><use href="#define"/></svg>Définir</button><button class="big"><svg class="i30"><use href="#show"/></svg>Afficher</button><button class="big"><svg class="i30"><use href="#refplane"/></svg>Plan<br>de référence</button><button class="big"><svg class="i30"><use href="#viewer"/></svg>Visionneuse</button></div><h2>Plan de construction</h2></div>
  <div class="panel ctx"><div class="body row tools"><button class="big"><svg class="i30"><use href="#eaves"/></svg>Aligner<br>les avant-toits</button><div class="adjust"><button class="sm dim sel"><svg class="i18"><use href="#setH"/></svg>Régler la hauteur</button><button class="sm dim"><svg class="i18"><use href="#setD"/></svg>Régler le débord</button></div></div><h2>Outils</h2></div>
</section>

<section class="options">
  <span class="mode">Modifier | Créer un tracé du toit</span>
  <label class="over">Débord du toit: <input class="num" type="text"></label>
  <label class="chk"><input type="checkbox">Définit l'inclinaison</label>
  <label class="chk off"><input type="checkbox" disabled>A partir des limites de la couche principale</label>
  <span class="act"><button>Active</button></span>
</section>

<main class="work">
  <aside class="browser">
    <div class="phead">Arborescence du projet - AI_TO_D30.rvt<svg class="i12"><use href="#x"/></svg></div>
    <div class="treewrap">
      <div class="tree">
        <ul class="top">
          <li class="views">
            <ul class="groups">
              <li><div class="node"><i class="box"></i>Plans d'étage (FURNITURE &amp; EQUIPMENT)</div><ul class="leaves"><li>D3000 - FURNITURES &amp; EQUIPMENT</li><li>D3001 - FURNITURES &amp; EQUIPMENT</li></ul></li>
              <li><div class="node"><i class="box"></i>Plans d'étage</div><ul class="leaves"><li>D30 - FOUNDATIONS</li><li><b>D30 - ROOF</b></li><li>D30S1</li><li>D3000</li><li>D3001</li></ul></li>
              <li><div class="node"><i class="box"></i>Plans d'étage (TRIRIGA DXF)</div><ul class="leaves"><li>D3000 - TRIRIGA DXF</li><li>D3001 - TRIRIGA DXF</li></ul></li>
              <li><div class="node"><i class="box"></i>Plans de plafond (CEILING)</div><ul class="leaves"><li>D3000 - CEILING</li><li>D3001 - CEILING</li></ul></li>
              <li><div class="node"><i class="box"></i>Vues 3D</div><ul class="leaves"><li>D30 - 3D - GIS</li><li>D3000 - 3D</li><li>D3001 - 3D</li><li><span class="picked">{3D}</span></li></ul></li>
              <li><div class="node"><i class="box"></i>Elévations (AIRBUS ELEVATION)</div><ul class="leaves"><li>D30 - EAST ELEVATION</li><li>D30 - NORTH ELEVATION</li><li>D30 - SOUTH ELEVATION</li><li>D30 - WEST ELEVATION</li></ul></li>
              <li><div class="node"><i class="box"></i>Coupes (AIRBUS SECTION)</div><ul class="leaves"><li>D30 - CROSS SECTION A</li><li>D30 - CROSS SECTION B</li><li>D30 - LONGITUDINAL SECTION A</li><li>D30 - LONGITUDINAL SECTION B</li></ul></li>
              <li><div class="node"><i class="box"></i>Plans de surface (Construction brute)</div><ul class="leaves"><li>D3000 - SB</li><li>D3001 - SB</li></ul></li>
              <li><div class="node"><i class="box"></i>Plans de surface (Surface de plancher)</div><ul class="leaves"><li>D3000 - SP</li><li>D3001 - SP</li></ul></li>
            </ul>
          </li>
          <li><div class="node"><i class="box"></i><svg class="i16"><use href="#legend"/></svg>Légendes</div><ul class="leaves"><li>LEGENDE</li></ul></li>
          <li><div class="node"><i class="box"></i><svg class="i16"><use href="#table"/></svg>Nomenclatures/Quantités (Tout)</div><ul class="leaves"><li>Liste de vues</li><li>Nomenclature des fenêtres</li><li>Nomenclature des pièces</li><li>Nomenclature des portes</li><li>Nomenclature des surfaces (Construction)</li><li>Nomenclature des surfaces (Surface de plancher)</li></ul></li>
        </ul>
      </div>
      <div class="vbar"><svg class="i8"><use href="#chevU"/></svg><i class="thumb"></i><svg class="i8"><use href="#chevD"/></svg></div>
    </div>
    <div class="hbar"><svg class="i8"><use href="#chevL"/></svg><i class="thumb"></i><svg class="i8"><use href="#chevR"/></svg></div>
  </aside>

  <section class="docs">
    <div class="doctabs"><a class="doc active" href="#"><svg class="i16"><use href="#plan"/></svg><b>D30 - ROOF</b><svg class="i12"><use href="#x"/></svg></a><a class="doc" href="#"><svg class="i14"><use href="#view3d"/></svg>{3D}</a><svg class="i8 more"><use href="#caretbar"/></svg></div>
    <div class="canvasrow">
      <svg class="canvas"><g fill="none"><rect x="256.500" y="234.500" width="636" height="191" stroke="#17178c"/><g stroke="#6f7fd0"><circle cx="256.500" cy="234.500" r="4"/><circle cx="892.500" cy="234.500" r="4"/><circle cx="256.500" cy="425.500" r="4"/><circle cx="892.500" cy="425.500" r="4"/></g></g></svg>
      <div class="vbar"><svg class="i8"><use href="#chevU"/></svg><i class="thumb"></i><svg class="i8"><use href="#chevD"/></svg></div>
    </div>
    <div class="viewbar"><span class="scale">1 : 100</span><svg class="i16"><use href="#v1"/></svg><svg class="i16"><use href="#v2"/></svg><svg class="i16"><use href="#v3"/></svg><svg class="i16"><use href="#v4"/></svg><svg class="i16"><use href="#v5"/></svg><svg class="i16"><use href="#v6"/></svg><svg class="i16"><use href="#v7"/></svg><svg class="i14"><use href="#v8"/></svg><svg class="i16"><use href="#v9"/></svg><svg class="i16"><use href="#v10"/></svg><svg class="i16"><use href="#v11"/></svg><svg class="i8 back"><use href="#chevL"/></svg><div class="track"><i class="thumb"></i></div><svg class="i8"><use href="#chevR"/></svg><i class="grip"></i></div>
  </section>

  <aside class="props">
    <div class="phead">Propriétés<svg class="i12"><use href="#x"/></svg></div>
    <div class="preview"><div class="pic"><svg viewBox="0 0 36 44"><path d="M1 1h17q13 0 13 13 0 8-7 11l11 18H23L13 26h-2v17H1z" fill="#a3a3a3"/><path d="M11 9h5q5 0 5 5t-5 5h-5z" fill="#e6e6e6"/><path d="M1 1l10 8v34H1z" fill="#8f8f8f"/></svg></div><svg class="i8"><use href="#caret"/></svg></div>
    <div class="typerow"><div class="combo"><select aria-label="Filtre"><option>&lt;Esquisse&gt; (4</option></select><svg class="i8"><use href="#chevT"/></svg></div><button class="edit"><svg class="i16"><use href="#types"/></svg>Modifier le type</button></div>
    <table>
      <colgroup><col class="c1"><col><col class="c3"></colgroup>
      <tr class="sec"><th colspan="3"><div>Contraintes<svg class="dbl"><use href="#dbl"/></svg></div></th></tr>
      <tr><td>Définit l'inclinai...</td><td class="focus"><input type="checkbox" aria-label="Définit l'inclinaison"></td><td></td></tr>
      <tr><td>Décalage à parti...</td><td>0.0000</td><td></td></tr>
      <tr class="sec"><th colspan="3"><div>Cotes<svg class="dbl"><use href="#dbl"/></svg></div></th></tr>
      <tr class="ro"><td>Inclinaison</td><td>30.00°</td><td></td></tr>
      <tr class="ro"><td>Longueur</td><td></td><td></td></tr>
    </table>
    <div class="pfoot"><a href="#">Aide des propriétés</a><button disabled>Appliquer</button></div>
  </aside>
</main>

<footer class="status">
  <span class="hint">Cliquez pour sélectionner. Appuyez sur TAB pour afficher d'autres options, sur CTRL pour ajouter et sur MAJ pour désactiver.</span>
  <svg class="i16"><use href="#wset"/></svg><div class="combo wide"><select aria-label="Sous-projet actif"><option></option></select><svg class="i8"><use href="#chevT"/></svg></div><svg class="i16"><use href="#pick0"/></svg><span class="cnt">:0</span>
  <div class="filters"><svg class="i16"><use href="#s1"/></svg><svg class="i16"><use href="#s2"/></svg><svg class="i16"><use href="#s3"/></svg><svg class="i16"><use href="#s4"/></svg><svg class="i16"><use href="#s5"/></svg><svg class="i14"><use href="#s6"/></svg><span class="flt"><svg class="i16"><use href="#funnel"/></svg>:4</span></div>
</footer>

<footer class="taskbar">
  <button class="start" aria-label="Démarrer"><svg class="i16"><use href="#win"/></svg></button>
  <label class="tsearch"><svg class="i16"><use href="#mag"/></svg><input type="text" placeholder="Taper ici pour rechercher" aria-label="Taper ici pour rechercher"></label>
  <div class="apps"><span><svg class="i16"><use href="#taskview"/></svg></span><span><svg class="i22"><use href="#cam"/></svg></span><span><svg class="i22"><use href="#vlc"/></svg></span><span><svg class="i22"><use href="#chrome"/></svg></span><span class="run"><svg class="i24"><use href="#outlook"/></svg><b>O</b></span><span><svg class="i24"><use href="#ppt"/></svg><b>P</b></span><span class="run"><svg class="i24"><use href="#word"/></svg><b>W</b></span><span><svg class="i24"><use href="#excel"/></svg><b>X</b></span><span class="run"><svg class="i22"><use href="#folder"/></svg></span><span class="run"><svg class="i24"><use href="#teams"/></svg><b>T</b></span><span class="run front"><svg class="i24"><use href="#rapp"/></svg></span><span class="run"><svg class="i22"><use href="#rec"/></svg></span></div>
  <div class="tray"><svg class="i22"><use href="#ask"/></svg><svg class="i16"><use href="#up"/></svg><svg class="i16"><use href="#cloud"/></svg><svg class="i16"><use href="#batt"/></svg><svg class="i16"><use href="#net"/></svg><svg class="i16"><use href="#snd"/></svg><time>12:39<br>22/11/2021</time><svg class="i18"><use href="#note"/></svg></div>
  <i class="share"></i>
</footer>

<div class="tip" role="tooltip"><b>Terminer le mode de modification</b><p>Enregistre les modifications et quitte le mode d'esquisse.</p><b class="f1">Appuyez sur F1 pour obtenir de l'aide</b></div>
<svg class="pointer"><use href="#arrow"/></svg>
</body>
</html>
```
FILE: styles.css
```css
* { box-sizing: border-box; }
html, body { margin: 0; height: 100%; }
body { display: flex; flex-direction: column; min-height: 100vh; overflow: hidden; position: relative; font: 12px/16px Roboto, "Open Sans", sans-serif; color: #222; background: #ececec; }
button, input, select { font: inherit; color: inherit; margin: 0; padding: 0; border: 0; background: none; border-radius: 0; }
select { appearance: none; }
a { color: inherit; text-decoration: none; }
ul { list-style: none; margin: 0; padding: 0; }
b { font: bold 11px/16px "Open Sans", sans-serif; }
svg { display: block; flex: none; }
.defs { position: absolute; }
.i6 { width: 8px; height: 8px; } .i8 { width: 10px; height: 10px; } .i12 { width: 13px; height: 13px; }
.i14 { width: 16px; height: 16px; } .i16 { width: 17px; height: 17px; } .i18 { width: 18px; height: 18px; } .i20 { width: 20px; height: 20px; }
.i22 { width: 22px; height: 22px; } .i24 { width: 24px; height: 24px; } .i30 { width: 30px; height: 30px; }

/* title bar */
.titlebar { display: flex; height: 29px; background: #808080; color: #fff; flex: none; }
.qat, .infocenter { display: grid; justify-items: center; align-items: center; height: 24px; }
.qat { color: #444; grid-template-columns: 24px 24px 30px 24px 22px 14px 24px 12px 24px 10px 26px 30px 10px 28px 22px 22px 8px 26px 10px 24px 24px 8px 24px 22px 10px 24px; }
.letter { font-size: 15px; color: #555; }
.vsep { width: 1px; height: 22px; background: #999; }
.lit { display: flex; justify-content: center; align-items: center; width: 22px; height: 22px; background: #b5d6fa; border: 1px solid #3d6ea8; }
.apptitle { flex: 1; text-align: center; line-height: 20px; white-space: nowrap; }
.infocenter { grid-template-columns: 14px 180px 26px 24px 22px 24px 86px 8px 34px 34px 10px 36px 25px 22px; padding-right: 2px; }
.infocenter { margin-left: -4px; }
.infocenter .i6 { color: #555; }
.tri { color: #444; }
.search { width: 180px; height: 23px; background: #fff; border: 1px solid #111; padding-left: 3px; font-style: italic; color: #444; }
.search::placeholder { color: #555; opacity: 1; }
.login { color: #e6e6e6; }

/* ribbon tabs */
.tabs { display: flex; height: 20px; background: #808080; color: #f2f2f2; flex: none; white-space: nowrap; line-height: 20px; }
.tabs a { padding: 0 10px; }
.tabs a:nth-child(-n+10) { padding-right: 9px; }
.tabs .file { background: #1f78b4; color: #fff; padding: 0 9px; margin-right: 2px; }
.tabs .current { background: #d3ebe6; color: #1c1c1c; }
.toggle { display: flex; align-items: center; gap: 4px; padding-left: 22px; }
.tgl { width: 16px; height: 10px; }

/* ribbon */
.ribbon { display: grid; height: 96px; flex: none; background: #d3ebe6; border-bottom: 1px solid #5c6b69; grid-template-columns: 90px 64px 92px 151px 239px 64px 58px 82px 47px 262px 239px 206px; }
.panel { display: flex; flex-direction: column; background: #ececec; border-right: 1px solid #f6f6f6; min-width: 0; }
.body { height: 75px; flex: none; color: #333; }
.panel h2 { flex: 1; margin: 0; font: 12px/19px Roboto, sans-serif; text-align: center; display: flex; justify-content: center; align-items: center; gap: 4px; }
.ctx h2 { background: #d3ebe6; }
.panel button { color: #333; white-space: nowrap; }
.row { display: flex; }
.center { display: flex; justify-content: center; padding-top: 3px; }
.modify { display: flex; flex-direction: column; align-items: center; width: 52px; height: 72px; padding-top: 7px; gap: 6px; background: #b2d6f8; border: 1px solid #3a73b5; }
.modify .cur { width: 16px; height: 24px; }
.stack { display: flex; flex-direction: column; align-items: center; justify-content: space-between; padding-top: 6px; }
.ctx .stack { padding-top: 9px; }
.on { display: flex; justify-content: center; align-items: center; width: 38px; height: 35px; background: #b7dcfa; border: 1px solid #2f6db0; }
.pr { width: 22px; height: 31px; }
.paste { padding-left: 10px; }
.big { display: flex; flex-direction: column; align-items: center; padding-top: 7px; line-height: 15px; text-align: center; gap: 4px; }
.paste .big { width: 46px; }
.big .i6 { margin-top: -4px; }
.panel .dim { color: #a8a8a8; }
.col3 { display: grid; grid-template-rows: repeat(3, 24px); padding: 3px 0 0 7px; align-items: center; }
.sm { display: flex; align-items: center; gap: 6px; }
.geo { display: grid; grid-template: repeat(3, 24px) / 90px 25px 20px 12px; padding: 3px 0 0 2px; align-items: center; color: #777; }
.geo .sm { gap: 5px; }
.geo .sm .i6 { color: #888; margin-left: 2px; }
.mod { padding: 3px 0 0 3px; }
.grid4 { display: grid; grid-template: repeat(2, 36px) / repeat(4, 39px); place-items: center; }
.grid3 { display: grid; grid-template: repeat(3, 24px) / repeat(3, 25px); place-items: center; margin-left: 3px; }
.vue { display: grid; grid-template: repeat(3, 24px) / 28px 8px 28px; place-items: center; padding-top: 3px; }
.mes { display: grid; grid-template: repeat(2, 36px) / 44px 8px; place-items: center; padding-top: 3px; }
.cre { display: grid; grid-template: repeat(2, 37px) / repeat(2, 38px); place-items: center; padding: 2px 0 0 2px; }
.finish { background: #c5e4fc; }
.draw { padding-left: 5px; }
.pair { display: grid; grid-template-rows: repeat(2, 24px); align-content: start; padding-top: 15px; width: 130px; }
.pair .sm { gap: 5px; }
.gallery { display: grid; grid-template: repeat(3, 23px) / repeat(5, 22px); place-items: center; align-content: start; margin-top: 4px; border: 1px solid #c8c8c8; border-right: 0; width: 111px; }
.spin { display: grid; grid-template-rows: 26px 26px 18px; margin-top: 4px; width: 15px; align-content: start; }
.spin button { display: grid; place-items: center; border: 1px solid #c8c8c8; background: #f3f3f3; }
.plan { padding-left: 7px; }
.plan .big:nth-child(1) { width: 36px; } .plan .big:nth-child(2) { width: 56px; } .plan .big:nth-child(3) { width: 66px; } .plan .big:nth-child(4) { width: 74px; }
.tools { gap: 6px; }
.tools .big { width: 79px; }
.adjust { padding-top: 17px; }
.adjust .sm { width: 119px; height: 22px; padding-left: 4px; gap: 2px; background: #f1eeee; }
.adjust .sel { background: #c3d9f3; border: 1px solid #6a94cc; color: #93a1b5; }

/* options bar */
.options { display: flex; align-items: center; height: 27px; flex: none; background: #d3ebe6; white-space: nowrap; }
.mode { width: 207px; padding-left: 8px; border-right: 1px solid #9fb0ad; }
.over { display: flex; align-items: center; width: 231px; padding-left: 22px; gap: 4px; }
.num { width: 118px; height: 22px; border: 1px solid #e2f2ef; margin-left: auto; margin-right: 7px; background: #d0e8e3; }
.chk { display: flex; align-items: center; gap: 3px; width: 127px; }
input[type=checkbox] { appearance: none; width: 13px; height: 13px; background: #fff; border: 1px solid #333; }
.off { color: #7c8a88; width: 254px; border-right: 1px solid #9fb0ad; }
.off input[type=checkbox] { border-color: #e0e6e5; }
.act { padding-left: 8px; }
.act button { width: 90px; height: 22px; padding-left: 6px; background: #fff; border: 1px solid #999; text-align: left; }

/* work area */
.work { display: grid; grid-template-columns: 273px minmax(0, 1fr) 218px; flex: 1; min-height: 0; }
.phead { display: flex; align-items: center; justify-content: space-between; height: 21px; flex: none; padding: 0 2px 0 3px; background: #eee; color: #444; }
.browser, .docs, .props { display: flex; flex-direction: column; min-height: 0; min-width: 0; background: #ececec; }
.browser { border-right: 4px solid #cfcfcf; }
.treewrap { display: flex; flex: 1; min-height: 0; background: #fff; }
.tree { flex: 1; overflow: hidden; white-space: nowrap; line-height: 18px; padding-left: 9px; min-width: 0; }
.top > li, .groups > li, .leaves > li { background: repeating-linear-gradient(#aaa 0 1px, transparent 1px 2px) 0 0 / 1px 100% no-repeat; }
.views { padding-left: 20px; }
.groups > li:last-child, .top > li:last-child, .leaves > li:last-child { background-size: 1px 9px; }
.node { display: flex; align-items: center; height: 18px; }
.box { width: 9px; height: 9px; margin-left: -4px; margin-right: 13px; border: 1px solid #999; background: linear-gradient(#444, #444) 1px 3px / 5px 1px no-repeat #fff; flex: none; }
.box + svg { margin-left: -7px; margin-right: 6px; }
.leaves { margin-left: 20px; }
.leaves > li { display: flex; height: 18px; align-items: center; }
.leaves > li::before { content: ""; width: 15px; margin-right: 3px; border-bottom: 1px dotted #aaa; flex: none; }
.leaves b { font: bold 12px/18px Roboto, sans-serif; }
.picked { background: #dcdcdc; line-height: 16px; padding: 0 2px; margin-left: -2px; }
.vbar { display: flex; flex-direction: column; align-items: center; width: 15px; flex: none; background: #f0f0f0; padding: 6px 0 3px; }
.vbar .thumb { width: 100%; background: #cdcdcd; flex: none; }
.browser .vbar .thumb { margin-top: 59px; flex: 1; margin-bottom: 74px; }
.hbar { display: flex; align-items: center; height: 19px; flex: none; background: #f0f0f0; padding: 0 19px 0 4px; }
.hbar .thumb { width: 179px; height: 15px; background: #cdcdcd; margin-left: 4px; margin-right: auto; }

.doctabs { display: flex; height: 21px; flex: none; background: #cbcbcb; padding-right: 6px; }
.doc { display: flex; align-items: center; gap: 6px; padding: 0 6px; color: #666; }
.active { background: #fff; width: 128px; color: #444; padding: 0 4px; gap: 8px; }
.active b { flex: 1; }
.more { margin: 6px 0 0 auto; }
.canvasrow { display: flex; flex: 1; min-height: 0; background: #fff; border-right: 4px solid #e6e6e6; }
.canvas { flex: 1; width: 100%; height: 100%; min-width: 0; }
.docs { border-right: 1px solid #c4c4c4; }
.docs .vbar .thumb { height: 16px; margin: auto 0; }
.viewbar { display: flex; align-items: center; height: 19px; flex: none; background: #f0f0f0; padding: 0 4px 0 26px; gap: 4px; }
.scale { width: 50px; }
.viewbar .i14 { width: 17px; }
.back { margin-left: 3px; }
.track { flex: 1; display: flex; align-items: center; }
.track .thumb { width: 17px; height: 15px; background: #cdcdcd; margin: 0 auto; }
.grip { width: 8px; height: 8px; margin-left: 8px; background: radial-gradient(circle, #bbb 1px, transparent 1px) 0 0 / 4px 4px; }

.props { background: #fff; }
.preview { display: flex; align-items: center; justify-content: space-between; height: 71px; flex: none; padding: 0 1px 0 7px; color: #999; background: linear-gradient(#f7f7f7, #e2e2e2); }
.pic { width: 65px; height: 64px; border: 1px solid #e8e8e8; background: linear-gradient(#f0f0f0, #e4e4e4); padding: 4px 0 0 14px; }
.pic svg { width: 36px; height: 44px; }
.typerow { display: flex; align-items: center; gap: 7px; height: 26px; flex: none; padding-left: 2px; background: #f0f0f0; }
.combo { display: grid; grid-template-columns: 1fr 16px; align-items: center; width: 98px; height: 22px; background: #e1e1e1; border: 1px solid #aaa; color: #222; }
.combo select { padding-left: 4px; height: 20px; width: 100%; min-width: 0; }
.wide { width: 204px; height: 18px; background: #fff; border: 0; margin: 0 8px 0 7px; color: #999; }
.wide select { height: 18px; }
.edit { display: flex; align-items: center; gap: 4px; color: #a0a0a0; }
.props table { border-collapse: separate; border-spacing: 0; table-layout: fixed; width: 100%; flex: none; line-height: 17px; }
.c1 { width: 104px; } .c3 { width: 13px; }
.props td, .props th { padding: 0; height: 18px; white-space: nowrap; overflow: hidden; }
.props td { border-bottom: 1px dotted #777; border-right: 1px dotted #777; padding-left: 2px; }
.props td:first-child { padding-left: 8px; }
.props td:last-child { border-right: 0; }
.props .sec th { background: #dadada; text-align: left; font-weight: normal; }
.sec div { display: flex; justify-content: space-between; align-items: center; padding: 0 5px 0 2px; }
.dbl { width: 8px; height: 10px; }
.props td.focus { border: 1px solid #111; }
.focus input { display: block; }
.ro { color: #777; }
.pfoot { margin-top: auto; display: flex; align-items: center; justify-content: space-between; height: 28px; flex: none; background: #ececec; padding: 0 2px 0 4px; }
.pfoot a { color: #1a64c8; text-decoration: underline; }
.pfoot button { width: 73px; height: 21px; background: #ccc; color: #8c8c8c; }

/* status bar */
.status { display: flex; align-items: center; height: 24px; flex: none; background: #ccc; color: #111; white-space: nowrap; padding-left: 1px; }
.hint { width: 825px; }
.cnt { margin-left: 4px; }
.filters { display: flex; gap: 9px; margin-left: auto; align-items: center; padding-right: 70px; }
.flt { display: flex; align-items: center; gap: 1px; }

/* task bar */
.taskbar { position: relative; display: flex; height: 40px; flex: none; background: #2b2b2b; color: #fff; }
.start { display: grid; place-items: center; width: 48px; }
.tsearch { display: flex; align-items: center; gap: 12px; width: 344px; background: #f0f0f0; padding-left: 11px; font: 14px/18px "Open Sans", sans-serif; color: #333; }
.tsearch input { flex: 1; }
.tsearch input::placeholder { color: #444; opacity: 1; }
.apps { display: flex; }
.apps span { position: relative; display: grid; place-items: center; width: 49px; }
.apps .run::after { content: ""; position: absolute; left: 4px; right: 4px; bottom: 0; height: 2px; background: #b4b4b4; }
.apps .front { background: #555; }
.apps span b { position: absolute; left: 15px; top: 13px; color: #fff; }
.tray { display: flex; align-items: center; gap: 7px; margin-left: auto; padding-right: 24px; }
.tray .i22 { margin-right: 2px; }
.tray time { width: 60px; margin: 0 10px 0 1px; text-align: center; line-height: 17px; }
.share { position: absolute; left: 0; right: 0; top: 4px; height: 6px; background: #0f2; }

/* tooltip and mouse pointer */
.tip { position: absolute; left: 864px; top: 119px; width: 314px; z-index: 3; background: #f0f0f7; border: 1px solid #767676; padding: 7px 7px 6px; color: #4a4a4a; white-space: nowrap; }
.tip b { display: block; }
.tip p { margin: 5px 0 7px; }
.tip .f1 { border-top: 1px solid #b0b0b0; margin: 0 -7px; padding: 6px 7px 0; }
.pointer { position: absolute; left: 863px; top: 103px; width: 16px; height: 24px; z-index: 4; clip-path: inset(0 0 6px); }
```
